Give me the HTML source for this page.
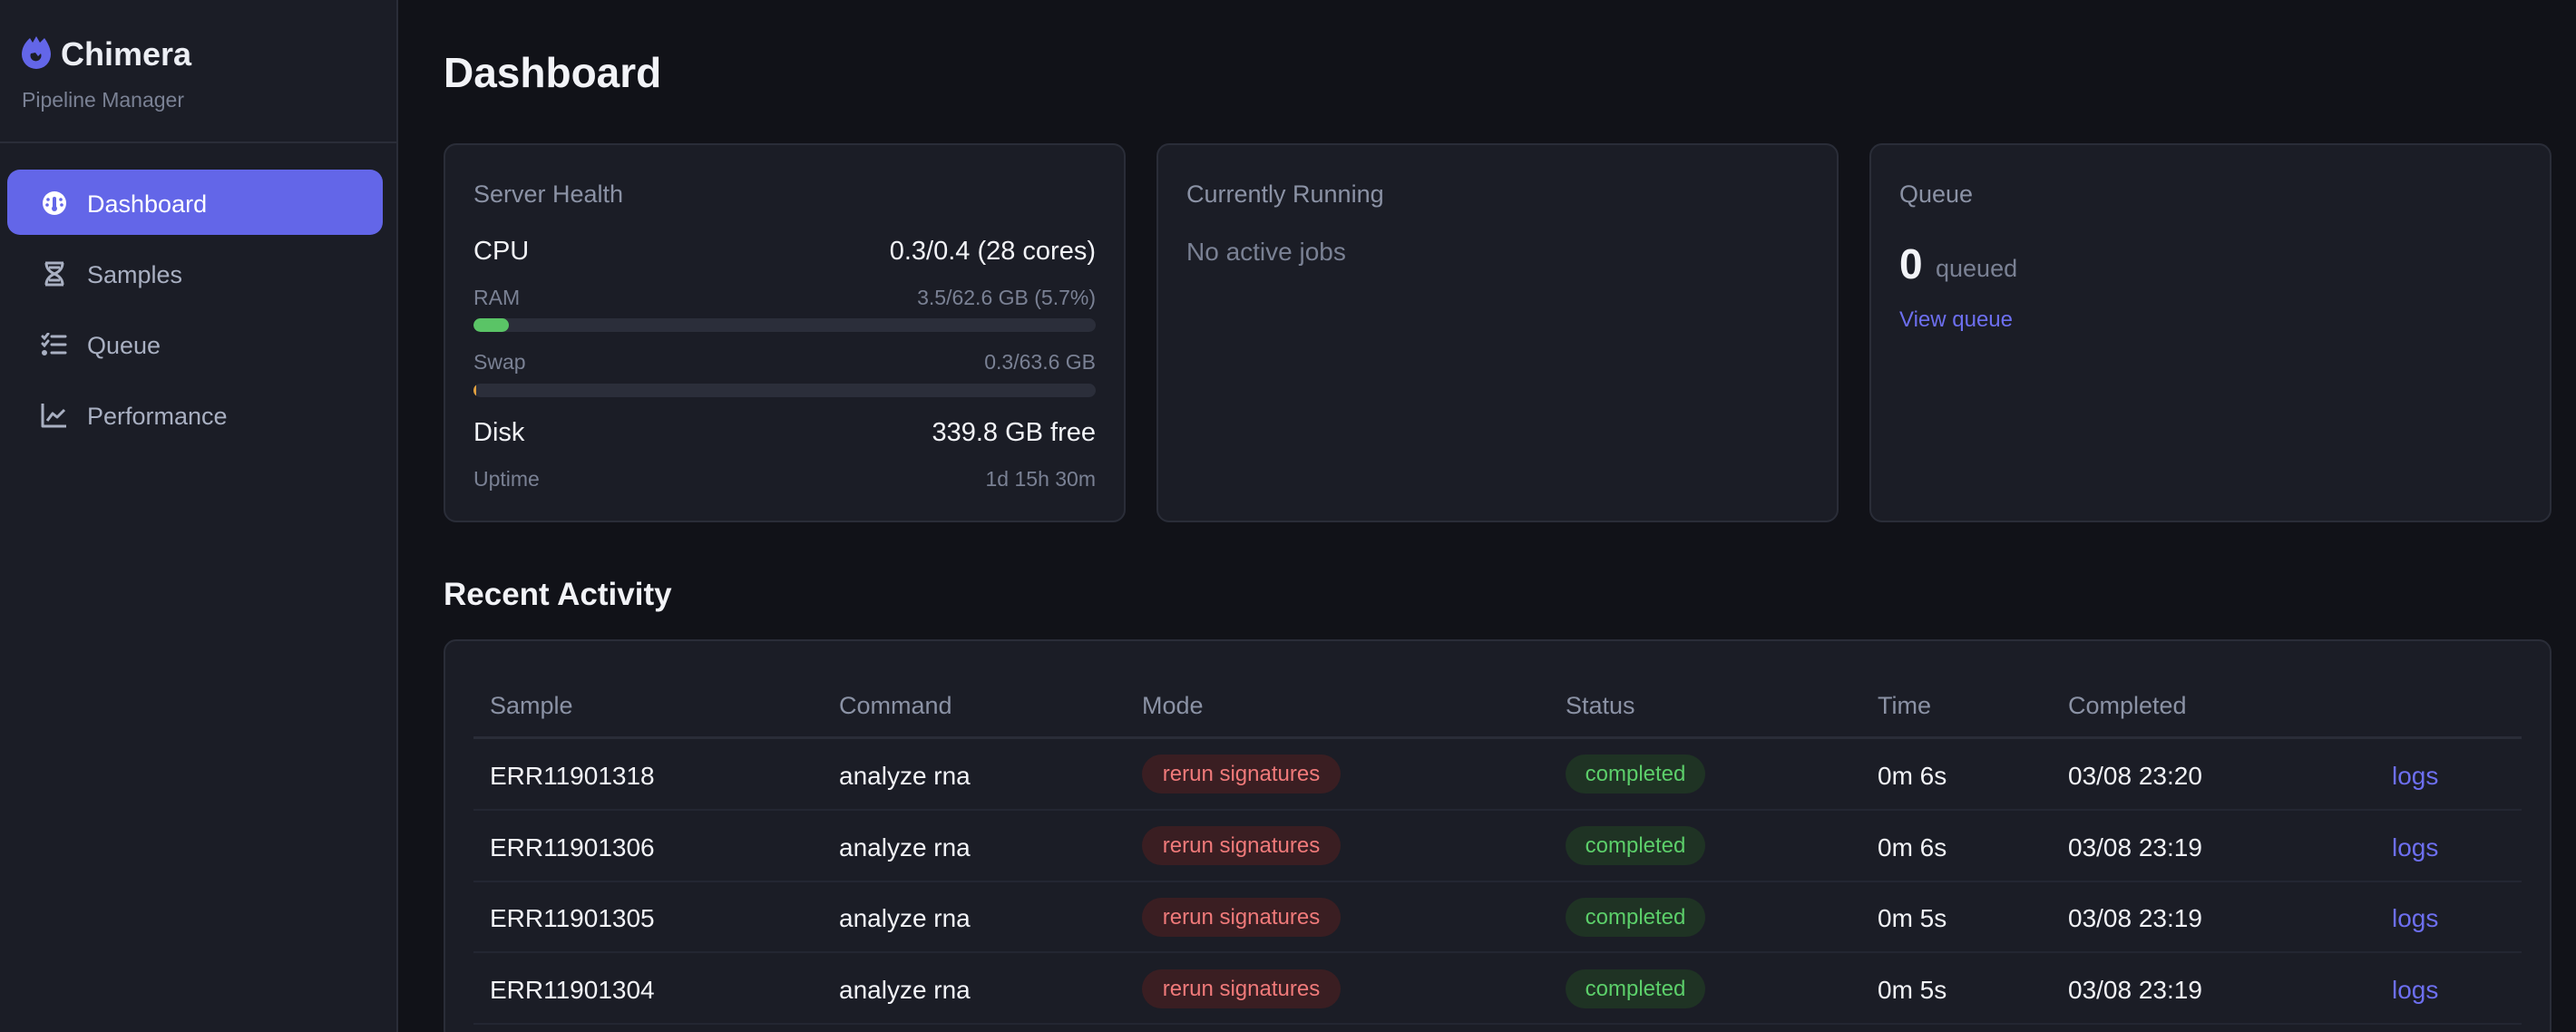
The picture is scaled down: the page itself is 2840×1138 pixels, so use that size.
<!DOCTYPE html>
<html style="width:2840px;height:1138px;overflow:hidden"><head><meta charset="utf-8"><style>
*{margin:0;padding:0;box-sizing:border-box}
body{width:2840px;height:1138px;overflow:hidden;background:#111218;font-family:"Liberation Sans",sans-serif;color:#e6e8ee;position:relative}
.a{position:absolute;white-space:nowrap}
.side{position:absolute;left:0;top:0;width:439px;height:1138px;background:#1b1d26;border-right:2px solid #2a2d38}
.card{position:absolute;background:#1b1d26;border:2px solid #2a2d38;border-radius:14px}
.ct{font-size:27px;color:#8b92a5}
.lab{font-size:23px;color:#7a8194}
.big{font-size:29px;color:#f2f3f7}
.bar{position:absolute;height:15px;background:#2b2e3a;border-radius:8px;overflow:hidden}
.th{font-size:27px;color:#8b92a5}
.td{font-size:28px;color:#f2f3f7}
.pill{position:absolute;height:43px;border-radius:22px;font-size:24px;line-height:43px;text-align:center}
.red{background:#3a1e22;color:#f07a7a;width:219px}
.grn{background:#1f3324;color:#5ccf6a;width:154px}
.hr{position:absolute;left:522px;width:2258px;height:2px;background:#232632}
.nav{font-size:27px;color:#a9b0c2}
</style></head><body>
<div class="side"></div>
<svg class="a" style="left:23px;top:38px" width="34" height="38" viewBox="0 0 34 38"><path d="M17 2 L21 9 L26 4 Q33 14 33 22 A16 16 0 0 1 1 22 Q1 12 10 4 L13 9 Z" fill="#6366e8"/><path d="M11 21 A6 6 0 1 0 22 21 L19 24 L16 20 Z" fill="#1b1d26"/></svg>
<div class="a" style="left:67px;top:39px;font-size:36px;font-weight:bold;color:#eceef4">Chimera</div>
<div class="a" style="left:24px;top:97px;font-size:23px;color:#7a8194">Pipeline Manager</div>
<div class="a" style="left:0;top:156px;width:439px;height:2px;background:#2a2d38"></div>
<div class="a" style="left:8px;top:187px;width:414px;height:72px;background:#6366e8;border-radius:14px"></div>
<svg class="a" style="left:46px;top:210px" width="28" height="28" viewBox="0 0 28 28"><circle cx="14" cy="14" r="13" fill="#fff"/><rect x="12" y="7" width="4" height="12" rx="2" fill="#6366e8"/><circle cx="14" cy="20" r="3" fill="#6366e8"/><circle cx="7" cy="10" r="1.8" fill="#6366e8"/><circle cx="21" cy="10" r="1.8" fill="#6366e8"/><circle cx="6" cy="16" r="1.8" fill="#6366e8"/><circle cx="22" cy="16" r="1.8" fill="#6366e8"/></svg>
<div class="a" style="left:96px;top:210px;font-size:27px;color:#fff">Dashboard</div>
<svg class="a" style="left:47px;top:288px" width="26" height="28" viewBox="0 0 26 28" fill="none" stroke="#a9b0c2" stroke-width="3"><path d="M3 2 H23 M3 26 H23 M4 2 Q4 10 13 14 Q22 18 22 26 M22 2 Q22 10 13 14 Q4 18 4 26 M7 7 H19 M7 21 H19"/></svg>
<div class="a nav" style="left:96px;top:288px">Samples</div>
<svg class="a" style="left:45px;top:367px" width="30" height="26" viewBox="0 0 30 26" fill="none" stroke="#a9b0c2" stroke-width="3" stroke-linecap="round"><path d="M2 4 L4 6 L8 1 M2 12 L4 14 L8 9 M12 4 H27 M12 13 H27 M12 22 H27"/><circle cx="4" cy="22" r="1.5" fill="#a9b0c2"/></svg>
<div class="a nav" style="left:96px;top:366px">Queue</div>
<svg class="a" style="left:45px;top:444px" width="30" height="28" viewBox="0 0 30 28" fill="none" stroke="#a9b0c2" stroke-width="3" stroke-linejoin="round"><path d="M2 1 V26 H28 M7 20 L13 12 L18 16 L26 8"/></svg>
<div class="a nav" style="left:96px;top:444px">Performance</div>

<div class="a" style="left:489px;top:53px;font-size:46px;font-weight:bold;color:#f2f3f7">Dashboard</div>

<div class="card" style="left:489px;top:158px;width:752px;height:418px"></div>
<div class="a ct" style="left:522px;top:199px">Server Health</div>
<div class="a big" style="left:522px;top:261px">CPU</div>
<div class="a big" style="right:1632px;top:261px">0.3/0.4 (28 cores)</div>
<div class="a lab" style="left:522px;top:315px">RAM</div>
<div class="a lab" style="right:1632px;top:315px">3.5/62.6 GB (5.7%)</div>
<div class="bar" style="left:522px;top:351px;width:686px"><div style="width:39px;height:15px;background:#5ac466;border-radius:8px"></div></div>
<div class="a lab" style="left:522px;top:386px">Swap</div>
<div class="a lab" style="right:1632px;top:386px">0.3/63.6 GB</div>
<div class="bar" style="left:522px;top:423px;width:686px"><div style="width:3px;height:15px;background:#e0a040"></div></div>
<div class="a big" style="left:522px;top:461px">Disk</div>
<div class="a big" style="right:1632px;top:461px">339.8 GB free</div>
<div class="a lab" style="left:522px;top:515px">Uptime</div>
<div class="a lab" style="right:1632px;top:515px">1d 15h 30m</div>

<div class="card" style="left:1275px;top:158px;width:752px;height:418px"></div>
<div class="a ct" style="left:1308px;top:199px">Currently Running</div>
<div class="a" style="left:1308px;top:262px;font-size:28px;color:#7a8194">No active jobs</div>

<div class="card" style="left:2061px;top:158px;width:752px;height:418px"></div>
<div class="a ct" style="left:2094px;top:199px">Queue</div>
<div class="a" style="left:2094px;top:264px;font-size:46px;font-weight:bold;color:#f2f3f7">0</div>
<div class="a" style="left:2134px;top:281px;font-size:27px;color:#7a8194">queued</div>
<div class="a" style="left:2094px;top:339px;font-size:24px;color:#6d6ff0">View queue</div>

<div class="a" style="left:489px;top:636px;font-size:35px;font-weight:bold;color:#f2f3f7">Recent Activity</div>
<div class="card" style="left:489px;top:705px;width:2324px;height:445px"></div>
<div class="a th" style="left:540px;top:763px">Sample</div>
<div class="a th" style="left:925px;top:763px">Command</div>
<div class="a th" style="left:1259px;top:763px">Mode</div>
<div class="a th" style="left:1726px;top:763px">Status</div>
<div class="a th" style="left:2070px;top:763px">Time</div>
<div class="a th" style="left:2280px;top:763px">Completed</div>
<div class="hr" style="top:812px;height:3px;background:#2a2d38"></div>

<div class="a td" style="left:540px;top:840px">ERR11901318</div><div class="a td" style="left:925px;top:840px">analyze rna</div>
<div class="pill red" style="left:1259px;top:832px">rerun signatures</div><div class="pill grn" style="left:1726px;top:832px">completed</div>
<div class="a td" style="left:2070px;top:840px">0m 6s</div><div class="a td" style="left:2280px;top:840px">03/08 23:20</div><div class="a td" style="left:2637px;top:840px;color:#6d6ff0">logs</div>
<div class="hr" style="top:892px"></div>

<div class="a td" style="left:540px;top:919px">ERR11901306</div><div class="a td" style="left:925px;top:919px">analyze rna</div>
<div class="pill red" style="left:1259px;top:911px">rerun signatures</div><div class="pill grn" style="left:1726px;top:911px">completed</div>
<div class="a td" style="left:2070px;top:919px">0m 6s</div><div class="a td" style="left:2280px;top:919px">03/08 23:19</div><div class="a td" style="left:2637px;top:919px;color:#6d6ff0">logs</div>
<div class="hr" style="top:971px"></div>

<div class="a td" style="left:540px;top:997px">ERR11901305</div><div class="a td" style="left:925px;top:997px">analyze rna</div>
<div class="pill red" style="left:1259px;top:990px">rerun signatures</div><div class="pill grn" style="left:1726px;top:990px">completed</div>
<div class="a td" style="left:2070px;top:997px">0m 5s</div><div class="a td" style="left:2280px;top:997px">03/08 23:19</div><div class="a td" style="left:2637px;top:997px;color:#6d6ff0">logs</div>
<div class="hr" style="top:1049px"></div>

<div class="a td" style="left:540px;top:1076px">ERR11901304</div><div class="a td" style="left:925px;top:1076px">analyze rna</div>
<div class="pill red" style="left:1259px;top:1069px">rerun signatures</div><div class="pill grn" style="left:1726px;top:1069px">completed</div>
<div class="a td" style="left:2070px;top:1076px">0m 5s</div><div class="a td" style="left:2280px;top:1076px">03/08 23:19</div><div class="a td" style="left:2637px;top:1076px;color:#6d6ff0">logs</div>
<div class="hr" style="top:1128px"></div>
</body></html>
